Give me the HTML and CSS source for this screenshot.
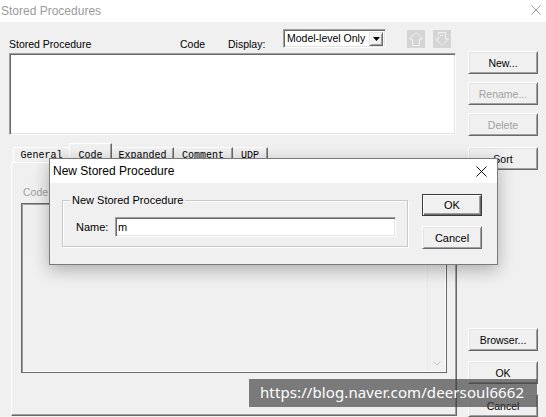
FILE: index.html
```html
<!DOCTYPE html>
<html>
<head>
<meta charset="utf-8">
<link rel="stylesheet" href="styles.css">
</head>
<body>
<div class="window">
  <div class="titlebar">
    <span class="title">Stored Procedures</span>
    <svg class="win-close" width="10" height="10" viewBox="0 0 10 10"><path d="M0.5 0.5 L9.5 9.5 M9.5 0.5 L0.5 9.5" stroke="#9a9a9a" stroke-width="1" fill="none"/></svg>
  </div>
  <div class="main">
    <div class="left">
      <div class="header">
        <span class="lbl lbl-sp">Stored Procedure</span>
        <span class="lbl lbl-code">Code</span>
        <span class="lbl lbl-display">Display:</span>
        <div class="combo">
          <span class="combo-text">Model-level Only</span>
          <span class="combo-btn"><svg width="7" height="4" viewBox="0 0 7 4"><path d="M0 0 H7 L3.5 4 Z" fill="#000"/></svg></span>
        </div>
        <svg class="arrowbtn up" width="18" height="18" viewBox="0 0 18 18"><rect width="18" height="18" fill="#d4d4d4"/><path d="M9 2.5 L15.5 9 L12.5 9 L12.5 15.5 L5.5 15.5 L5.5 9 L2.5 9 Z" fill="none" stroke="#f2f2f2" stroke-width="1"/></svg>
        <svg class="arrowbtn down" width="18" height="18" viewBox="0 0 18 18"><rect width="18" height="18" fill="#d4d4d4"/><path d="M5.5 4.5 L5.5 2.5 L12.5 2.5 L12.5 9 L15.5 9 L9 15.5 L2.5 9 L5.5 9 L5.5 6.5" fill="none" stroke="#f2f2f2" stroke-width="1"/><path d="M7 5.5 H10" stroke="#f2f2f2" stroke-width="1"/></svg>
      </div>
      <div class="listbox"></div>
      <div class="tabs">
        <div class="tab t-general">General</div>
        <div class="tab t-code selected">Code</div>
        <div class="tab t-expanded">Expanded</div>
        <div class="tab t-comment">Comment</div>
        <div class="tab t-udp">UDP</div>
      </div>
      <div class="tabpage">
        <div class="code-label">Code</div>
        <div class="codebox">
          <div class="codearea"></div>
          <div class="vscroll">
            <svg width="8" height="5" viewBox="0 0 8 5"><path d="M0.5 0.5 L4 4 L7.5 0.5" fill="none" stroke="#c4c4c4" stroke-width="1"/></svg>
          </div>
        </div>
      </div>
    </div>
    <div class="right">
      <div class="btn">New...</div>
      <div class="btn disabled">Rename...</div>
      <div class="btn disabled">Delete</div>
      <div class="btn btn-sort">Sort</div>
      <div class="spacer"></div>
      <div class="bottom-group">
        <div class="btn">Browser...</div>
        <div class="btn">OK</div>
        <div class="btn">Cancel</div>
      </div>
    </div>
  </div>

  <div class="dialog">
    <div class="dlg-title">
      <span>New Stored Procedure</span>
      <svg class="dlg-close" width="11" height="11" viewBox="0 0 11 11"><path d="M0.5 0.5 L10.5 10.5 M10.5 0.5 L0.5 10.5" stroke="#111" stroke-width="1" fill="none"/></svg>
    </div>
    <div class="dlg-body">
      <div class="group">
        <span class="legend">New Stored Procedure</span>
        <div class="name-row">
          <span class="name-lbl">Name:</span>
          <div class="textbox">m</div>
        </div>
      </div>
      <div class="dlg-buttons">
        <div class="btn dbtn default">OK</div>
        <div class="btn dbtn">Cancel</div>
      </div>
    </div>
  </div>

  <div class="watermark">https://blog.naver.com/deersoul6662</div>
</div>
</body>
</html>
```

FILE: styles.css
```css
* { box-sizing: border-box; }
html, body { margin: 0; padding: 0; }
body {
  font-family: "Liberation Sans", Arial, sans-serif;
  font-size: 10.5px;
  color: #000;
  background: #f0f0f0;
}
.window {
  position: relative;
  width: 546px;
  height: 417px;
  background: #f0f0f0;
  overflow: hidden;
}
.titlebar {
  height: 22px;
  background: #fff;
  display: flex;
  align-items: center;
  justify-content: space-between;
  padding: 0 5px 1px 1px;
}
.title {
  font-size: 12px;
  color: #9a9a9a;
  line-height: 20px;
}
.win-close { display: block; margin-top: -1px; }

.main {
  display: flex;
  height: 395px;
  padding-left: 9px;
}
.left {
  width: 448px;
  display: flex;
  flex-direction: column;
}
.right {
  width: 70px;
  margin-left: 11px;
  display: flex;
  flex-direction: column;
  padding-top: 29px;
}

.header {
  height: 31px;
  padding-top: 7px;
  display: flex;
  align-items: flex-start;
}
.lbl {
  line-height: 12px;
  margin-top: 9px;
  white-space: nowrap;
}
.lbl-sp { width: 171px; }
.lbl-code { width: 48px; }
.lbl-display { width: 55px; }
.combo {
  width: 103px;
  height: 19px;
  background: #fff;
  border-top: 1px solid #a0a0a0;
  border-left: 1px solid #a0a0a0;
  border-right: 1px solid #fff;
  border-bottom: 1px solid #fff;
  box-shadow: inset 1px 1px 0 #696969, inset -1px -1px 0 #e3e3e3;
  display: flex;
  align-items: center;
  padding: 2px 2px 2px 3px;
}
.combo-text {
  flex: 1;
  line-height: 13px;
  white-space: nowrap;
  overflow: hidden;
}
.combo-btn {
  width: 14px;
  height: 14px;
  background: #f0f0f0;
  border-top: 1px solid #e3e3e3;
  border-left: 1px solid #e3e3e3;
  border-right: 1px solid #696969;
  border-bottom: 1px solid #696969;
  box-shadow: inset 1px 1px 0 #fff, inset -1px -1px 0 #a0a0a0;
  display: flex;
  align-items: center;
  justify-content: center;
}
.combo-btn svg { display: block; }
.arrowbtn { display: block; margin-top: 1px; }
.arrowbtn.up { margin-left: 21px; }
.arrowbtn.down { margin-left: 8px; }

.listbox {
  width: 447px;
  height: 82px;
  background: #fff;
  border-top: 1px solid #a0a0a0;
  border-left: 1px solid #a0a0a0;
  border-right: 1px solid #fff;
  border-bottom: 1px solid #fff;
  box-shadow: inset 1px 1px 0 #696969, inset -1px -1px 0 #e3e3e3;
}

.tabs {
  margin-top: 8px;
  margin-left: 4px;
  height: 19px;
  display: flex;
  align-items: flex-end;
  position: relative;
  z-index: 2;
}
.tab {
  height: 15px;
  font-family: "Liberation Mono", "Courier New", monospace;
  font-size: 10px;
  line-height: 13px;
  text-align: center;
  white-space: nowrap;
  background: #f0f0f0;
  border-top: 1px solid #fff;
  border-left: 1px solid #fff;
  border-right: 1px solid #696969;
  box-shadow: inset -1px 0 0 #a0a0a0;
  padding-top: 1px;
}
.t-general { width: 56px; border-right: none; box-shadow: none; }
.t-code { width: 43px; }
.t-expanded { width: 62px; border-left: none; }
.t-comment { width: 59px; border-left: none; }
.t-udp { width: 35px; border-left: none; }
.tab.selected {
  height: 20px;
  margin-bottom: -1px;
  padding-top: 5px;
}

.tabpage {
  margin-left: 2px;
  width: 446px;
  height: 254px;
  border-top: 1px solid #fff;
  border-left: 1px solid #fff;
  border-right: 1px solid #696969;
  border-bottom: 1px solid #696969;
  box-shadow: inset -1px -1px 0 #a0a0a0;
  padding-top: 23px;
  padding-left: 9px;
}
.code-label {
  line-height: 12px;
  color: #a0a0a0;
  padding-left: 2px;
}
.codebox {
  margin-top: 5px;
  width: 426px;
  height: 170px;
  border: 1px solid #696969;
  box-shadow: inset 1px 1px 0 #a0a0a0, inset -1px -1px 0 #fff;
  display: flex;
  padding: 1px;
}
.codearea { flex: 1; }
.vscroll {
  width: 18px;
  border-left: 1px solid #e8e8e8;
  display: flex;
  align-items: flex-end;
  justify-content: center;
  padding-bottom: 5px;
}
.vscroll svg { display: block; }

.btn {
  height: 23px;
  background: #f0f0f0;
  border-top: 1px solid #fff;
  border-left: 1px solid #fff;
  border-right: 1px solid #696969;
  border-bottom: 1px solid #696969;
  box-shadow: inset 1px 1px 0 #e3e3e3, inset -1px -1px 0 #a0a0a0;
  display: flex;
  align-items: center;
  justify-content: center;
  line-height: 12px;
  white-space: nowrap;
}
.right > .btn + .btn { margin-top: 8px; }
.right > .btn-sort { margin-top: 11px !important; }
.btn.disabled { color: #a0a0a0; }
.spacer { flex: 1; }
.bottom-group {
  display: flex;
  flex-direction: column;
  gap: 10px;
}

.dialog {
  position: absolute;
  left: 49px;
  top: 158px;
  width: 449px;
  height: 107px;
  background: #f0f0f0;
  border: 1px solid #7a7a7a;
  box-shadow: 0 5px 16px rgba(0, 0, 0, 0.28);
  z-index: 5;
  display: flex;
  flex-direction: column;
}
.dlg-title {
  height: 24px;
  background: #fff;
  display: flex;
  align-items: center;
  justify-content: space-between;
  padding: 0 10px 0 3px;
  font-size: 12px;
}
.dlg-close { display: block; }
.dlg-body {
  flex: 1;
  display: flex;
  align-items: flex-start;
  padding: 11px 15px 0 12px;
}
.group {
  position: relative;
  margin-top: 6px;
  width: 346px;
  height: 47px;
  border: 1px solid #c8c8c8;
  box-shadow: inset 1px 1px 0 #fff, 1px 1px 0 #fff;
  padding: 16px 0 0 13px;
}
.legend {
  position: absolute;
  left: 7px;
  top: -7px;
  padding: 0 2px;
  background: #f0f0f0;
  line-height: 12px;
  font-size: 11px;
  white-space: nowrap;
}
.name-row {
  display: flex;
  align-items: center;
}
.name-lbl {
  width: 39px;
  font-size: 11px;
  line-height: 12px;
}
.textbox {
  width: 281px;
  height: 20px;
  background: #fff;
  border-top: 1px solid #a0a0a0;
  border-left: 1px solid #a0a0a0;
  border-right: 1px solid #fff;
  border-bottom: 1px solid #fff;
  box-shadow: inset 1px 1px 0 #696969, inset -1px -1px 0 #e3e3e3;
  padding: 3px 0 0 2px;
  font-size: 11px;
  line-height: 13px;
}
.dlg-buttons {
  margin-left: 14px;
  width: 60px;
  display: flex;
  flex-direction: column;
  gap: 10px;
}
.dbtn { font-size: 11px; }
.dbtn.default {
  height: 22px;
  border: 1px solid #3a3a3a;
  box-shadow: inset 1px 1px 0 #fff, inset -1px -1px 0 #696969, inset -2px -2px 0 #a0a0a0;
}

.watermark {
  position: absolute;
  left: 249px;
  top: 379px;
  width: 288px;
  height: 28px;
  background: rgba(60, 60, 60, 0.66);
  color: #fff;
  font-family: "Noto Sans", "DejaVu Sans", sans-serif;
  font-size: 15px;
  line-height: 27px;
  padding-left: 11px;
  letter-spacing: 0.1px;
  white-space: nowrap;
  z-index: 6;
}
```
